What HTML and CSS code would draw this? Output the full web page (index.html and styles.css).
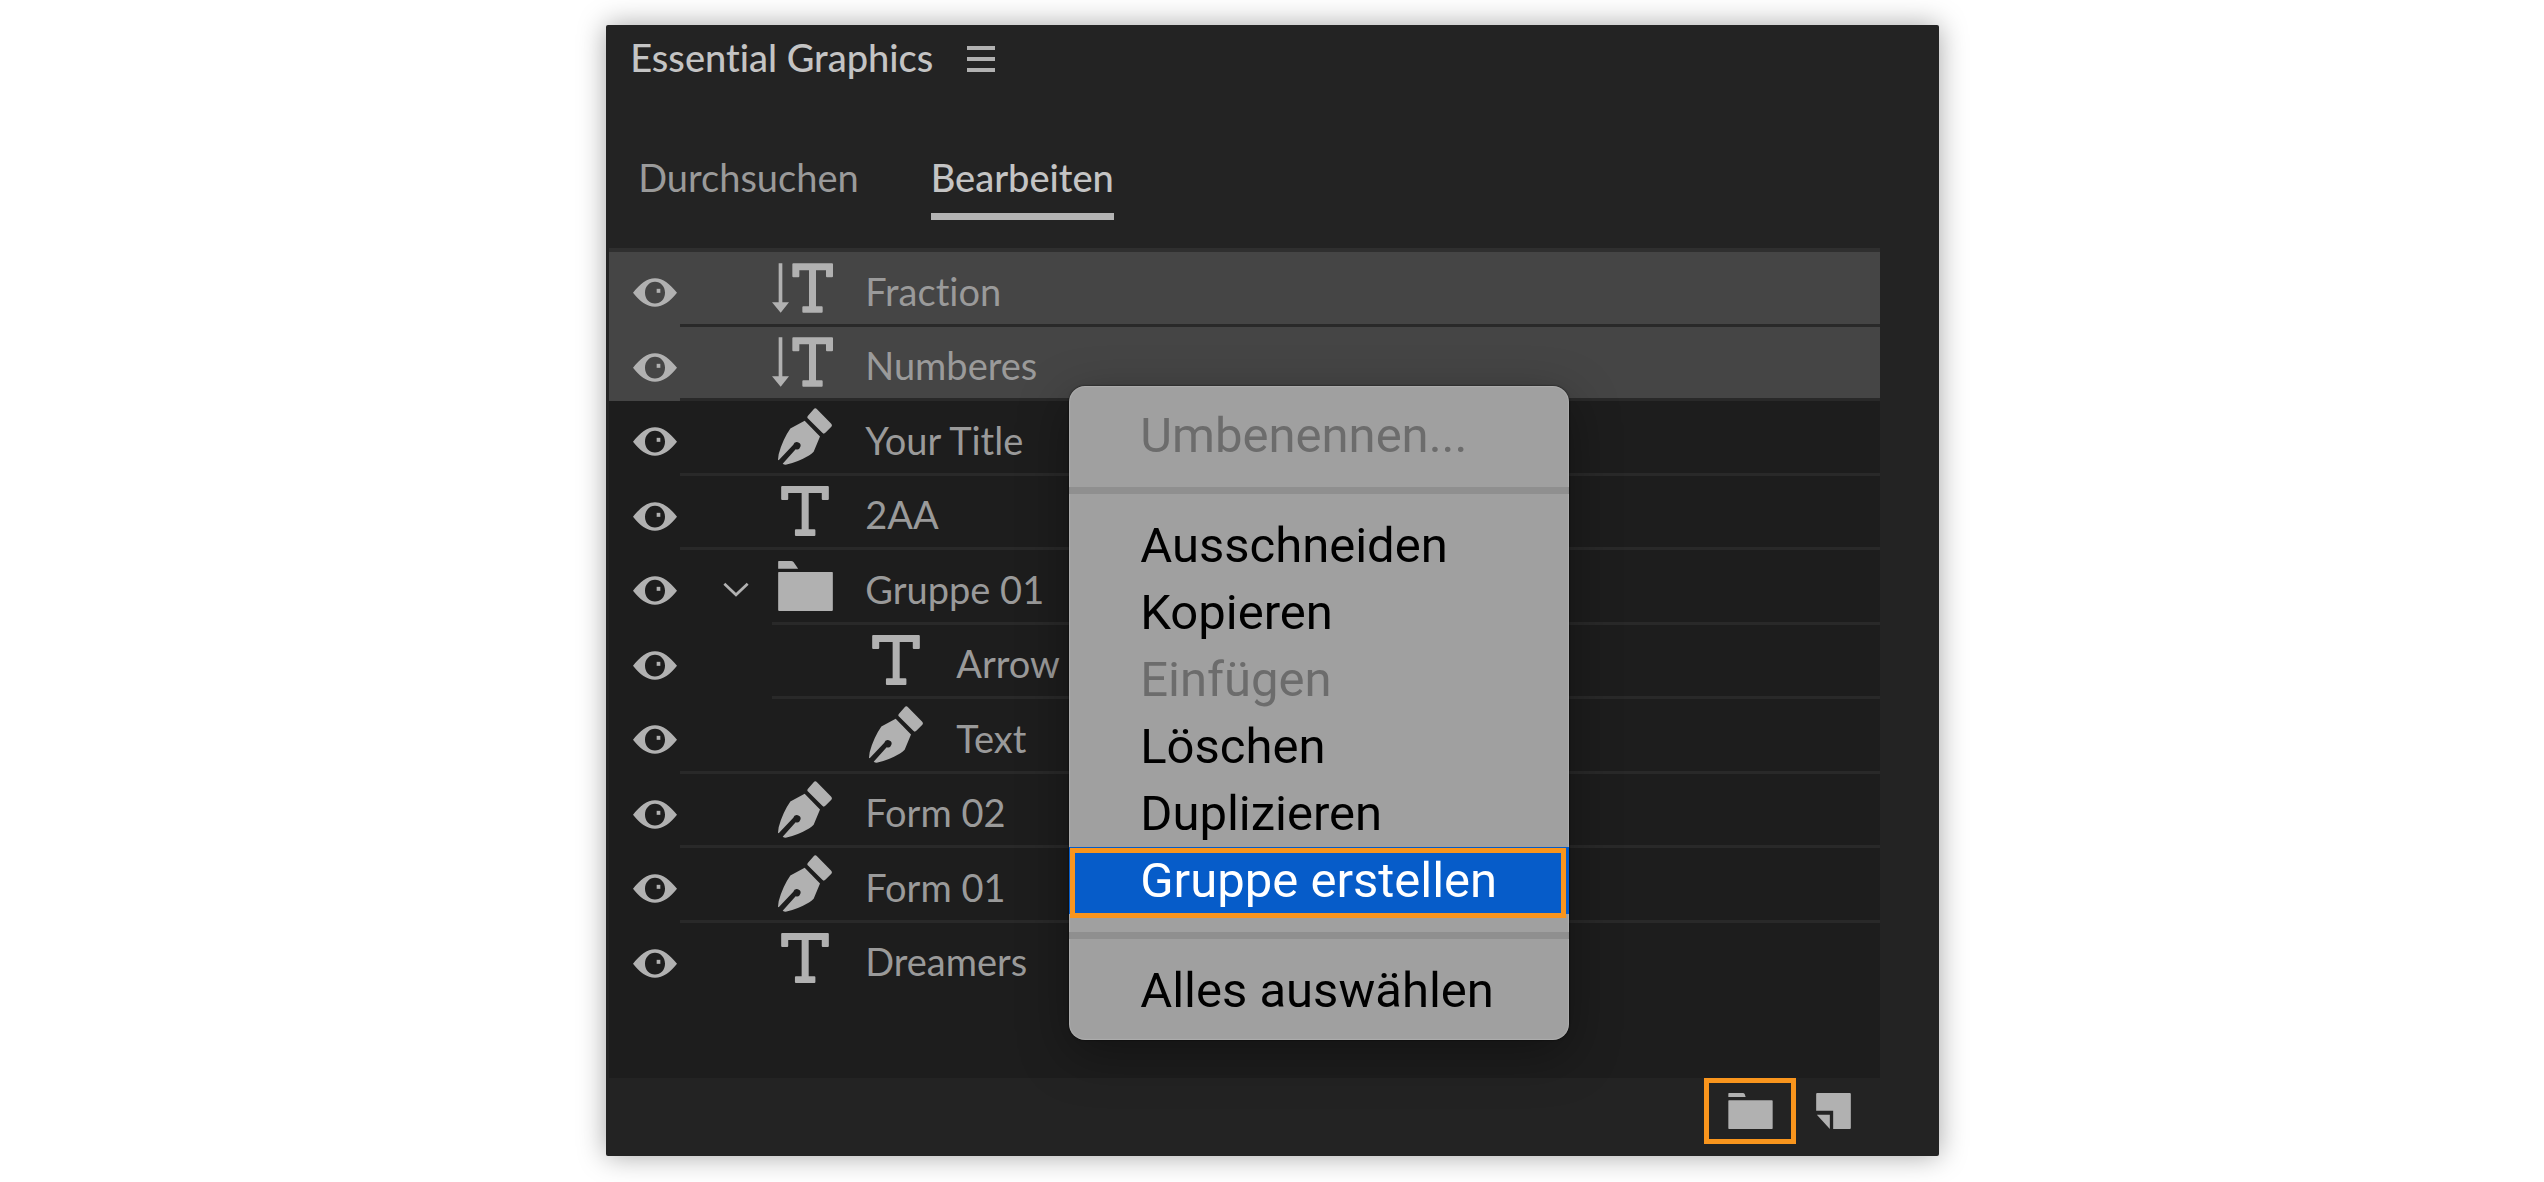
FILE: index.html
```html
<!DOCTYPE html>
<html lang="de">
	<head>
		<meta charset="utf-8">
		<title>Essential Graphics</title>
		<meta name="viewport" content="width=device-width,initial-scale=1">
		<link rel="stylesheet" href="styles.css">
	</head>
	<body>
		<svg class="sprite" aria-hidden="true">
			<symbol id="eye" viewBox="0 0 132 86">
				<path fill-rule="evenodd" d="M0 44C20 18 42 0 66 0s46 18 66 44C112 70 90 86 66 86S20 70 0 44zM66 11C49 11 36 25 36 44s13 32 30 32 30-13 30-32-13-33-30-33z"/>
				<rect x="71" y="32" width="11" height="12"/>
			</symbol>
			<symbol id="type" viewBox="0 0 142 149">
				<path d="M3 0h136q3 0 3 3v36q0 3-3 3h-15q-3 0-3-3V21H82v108h17q3 0 3 3v14q0 3-3 3H44q-3 0-3-3v-14q0-3 3-3h17V21H21v18q0 3-3 3H3q-3 0-3-3V3q0-3 3-3z"/>
			</symbol>
			<symbol id="type-vertical" viewBox="0 0 198 149">
				<path d="M20 0h11v117h20l-25 32L0 117h20z"/>
				<path d="M64 0h116q3 0 3 3v36q0 3-3 3h-15q-3 0-3-3V21h-30v108h17q3 0 3 3v14q0 3-3 3H94q-3 0-3-3v-14q0-3 3-3h17V21H82v18q0 3-3 3H64q-3 0-3-3V3q0-3 3-3z"/>
			</symbol>
			<symbol id="pen" viewBox="0 0 162 170">
				<path d="M107 3q5-5 10 0l42 43q5 5 1 10l-18 18q-5 5-9 0L90 31q-4-4 0-8z"/>
				<path d="M0 155L2 138Q14 94 37 61L80 38l46 47-19 46q-6 6-14 11-34 20-70 28-5 0-9-3l39-44A11 11 0 1 0 46 110L2 156z"/>
			</symbol>
			<symbol id="folder" viewBox="0 0 164 150">
				<path d="M2 0h37q4 0 7 3l14 20H0V2q0-2 2-2zM2 33h160q2 0 2 2v112q0 3-3 3H3q-3 0-3-3V35q0-2 2-2z"/>
			</symbol>
			<symbol id="bin" viewBox="0 0 133 108">
				<path d="M2 0h42q3 0 5 3l3 9H0V2q0-2 2-2zM2 22h129q2 0 2 2v82q0 2-2 2H2q-2 0-2-2V24q0-2 2-2z"/>
			</symbol>
			<symbol id="new-item" viewBox="0 0 104 108">
				<path d="M3 0h98q3 0 3 3v102q0 3-3 3H51V53H0V3q0-3 3-3zM2 65h39v43z"/>
			</symbol>
			<symbol id="chevron" viewBox="0 0 78 44">
				<path d="M4 5l35 33L74 5" fill="none" stroke="currentColor" stroke-width="8"/>
			</symbol>
			<symbol id="menu" viewBox="0 0 28 26">
				<path d="M0 0h28v4H0zM0 11h28v4H0zM0 22h28v4H0z"/>
			</symbol>
		</svg>

		<main class="panel">
			<header class="panel-header">
				<h1>Essential Graphics</h1>
				<button class="panel-menu" aria-label="Bedienfeldmenü"><svg width="28" height="26"><use href="#menu"/></svg></button>
			</header>

			<nav class="tabs">
				<button class="tab">Durchsuchen</button>
				<button class="tab active">Bearbeiten</button>
			</nav>

			<ul class="layers">
				<li class="layer selected">
					<button class="eye" aria-label="Sichtbarkeit"><svg width="44" height="29"><use href="#eye"/></svg></button>
					<span class="twist"></span>
					<div class="item"><span class="icon"><svg width="66" height="50"><use href="#type-vertical"/></svg></span><span class="name">Fraction</span></div>
				</li>
				<li class="layer selected">
					<button class="eye" aria-label="Sichtbarkeit"><svg width="44" height="29"><use href="#eye"/></svg></button>
					<span class="twist"></span>
					<div class="item"><span class="icon"><svg width="66" height="50"><use href="#type-vertical"/></svg></span><span class="name">Numberes</span></div>
				</li>
				<li class="layer">
					<button class="eye" aria-label="Sichtbarkeit"><svg width="44" height="29"><use href="#eye"/></svg></button>
					<span class="twist"></span>
					<div class="item"><span class="icon"><svg width="54" height="57"><use href="#pen"/></svg></span><span class="name">Your Title</span></div>
				</li>
				<li class="layer">
					<button class="eye" aria-label="Sichtbarkeit"><svg width="44" height="29"><use href="#eye"/></svg></button>
					<span class="twist"></span>
					<div class="item"><span class="icon"><svg width="48" height="50"><use href="#type"/></svg></span><span class="name">2AA</span></div>
				</li>
				<li class="layer group">
					<button class="eye" aria-label="Sichtbarkeit"><svg width="44" height="29"><use href="#eye"/></svg></button>
					<button class="twist" aria-label="Gruppe schließen"><svg width="26" height="15"><use href="#chevron"/></svg></button>
					<div class="item"><span class="icon"><svg width="55" height="50"><use href="#folder"/></svg></span><span class="name">Gruppe 01</span></div>
				</li>
				<li class="layer group child">
					<button class="eye" aria-label="Sichtbarkeit"><svg width="44" height="29"><use href="#eye"/></svg></button>
					<span class="twist"></span>
					<div class="item"><span class="icon"><svg width="48" height="50"><use href="#type"/></svg></span><span class="name">Arrow</span></div>
				</li>
				<li class="layer child">
					<button class="eye" aria-label="Sichtbarkeit"><svg width="44" height="29"><use href="#eye"/></svg></button>
					<span class="twist"></span>
					<div class="item"><span class="icon"><svg width="54" height="57"><use href="#pen"/></svg></span><span class="name">Text</span></div>
				</li>
				<li class="layer">
					<button class="eye" aria-label="Sichtbarkeit"><svg width="44" height="29"><use href="#eye"/></svg></button>
					<span class="twist"></span>
					<div class="item"><span class="icon"><svg width="54" height="57"><use href="#pen"/></svg></span><span class="name">Form 02</span></div>
				</li>
				<li class="layer">
					<button class="eye" aria-label="Sichtbarkeit"><svg width="44" height="29"><use href="#eye"/></svg></button>
					<span class="twist"></span>
					<div class="item"><span class="icon"><svg width="54" height="57"><use href="#pen"/></svg></span><span class="name">Form 01</span></div>
				</li>
				<li class="layer">
					<button class="eye" aria-label="Sichtbarkeit"><svg width="44" height="29"><use href="#eye"/></svg></button>
					<span class="twist"></span>
					<div class="item"><span class="icon"><svg width="48" height="50"><use href="#type"/></svg></span><span class="name">Dreamers</span></div>
				</li>
			</ul>

			<footer class="panel-footer">
				<button class="tool marked" aria-label="Gruppe erstellen"><svg width="45" height="36"><use href="#bin"/></svg></button>
				<button class="tool" aria-label="Neue Ebene"><svg width="35" height="36"><use href="#new-item"/></svg></button>
			</footer>

			<div class="context-menu">
				<button disabled>Umbenennen...</button>
				<hr>
				<button>Ausschneiden</button>
				<button>Kopieren</button>
				<button disabled>Einfügen</button>
				<button>Löschen</button>
				<button>Duplizieren</button>
				<button class="current">Gruppe erstellen</button>
				<hr>
				<button>Alles auswählen</button>
			</div>
		</main>
	</body>
</html>
```
FILE: styles.css
```css
* {
	box-sizing: border-box;
	margin: 0;
	padding: 0;
}

body {
	background: #fff;
	padding: 25px 0 26px 1px;
	font-family: Lato, 'Noto Sans', sans-serif;
	font-size: 38px;
	line-height: 44px;
	font-variant-ligatures: none;
	color: #9a9a9a;
}

button {
	background: none;
	border: 0;
	color: inherit;
	font: inherit;
	text-align: left;
	cursor: pointer;
}

svg {
	display: block;
	fill: currentColor;
}

.sprite {
	position: absolute;
	width: 0;
	height: 0;
}

.panel {
	position: relative;
	width: 52.4%;
	min-width: 1100px;
	margin: 0 auto;
	background: #232323;
	border-radius: 2px;
	box-shadow: 0 0 28px rgba(0,0,0,.36);
}

.panel-header {
	display: flex;
	align-items: center;
	gap: 34px;
	padding: 10px 24px 0;
}

.panel-header h1 {
	font-size: 38px;
	font-weight: 500;
	color: #c4c4c4;
}

.panel-menu {
	padding-top: 4px;
	color: #b1b1b1;
}

.tabs {
	display: flex;
	gap: 72px;
	padding: 76px 32px 0;
}

.tab {
	padding-bottom: 14px;
	border-bottom: 7px solid transparent;
}

.tab.active {
	border-color: #b4b4b4;
	font-weight: 500;
	color: #c4c4c4;
}

/* layer list */
.layers {
	display: grid;
	grid-template-rows: repeat(10, 1fr);
	list-style: none;
	height: 830px;
	margin: 28px 59px 0 3px;
	padding-bottom: 81px;
	border-top: 4px solid #2f2f2f;
	background: #1d1d1d;
}

.layer {
	display: flex;
}

.layer.selected {
	background: #454545;
}

.eye {
	width: 71px;
	padding: 7px 0 0 24px;
	color: #b1b1b1;
}

.twist {
	display: flex;
	align-items: center;
	justify-content: center;
	width: 92px;
	padding: 8px 0 0 20px;
	border-bottom: 3px solid #292929;
	color: #b1b1b1;
}

.item {
	display: flex;
	align-items: center;
	flex: 1;
	gap: 27px;
	border-bottom: 3px solid #292929;
}

.group .twist {
	border-color: transparent;
}

.child .item {
	padding-left: 91px;
}

.layer:last-child .twist,
.layer:last-child .item {
	border-color: transparent;
}

.icon {
	display: flex;
	justify-content: center;
	width: 66px;
	color: #b1b1b1;
}

.name {
	padding-top: 6px;
}

/* bottom toolbar */
.panel-footer {
	display: flex;
	align-items: flex-start;
	gap: 4px;
	height: 78px;
	padding-right: 72px;
	justify-content: flex-end;
}

.tool {
	display: flex;
	align-items: center;
	height: 66px;
	padding: 0 16px;
	color: #b1b1b1;
}

.tool.marked {
	padding: 0 18px 0 19px;
	border: 5px solid #f9951d;
}

/* context menu over the layers */
.context-menu {
	position: absolute;
	top: 361px;
	left: 463px;
	display: flex;
	flex-direction: column;
	width: 500px;
	padding: 16px 0;
	border-radius: 16px;
	background: #a0a0a0;
	box-shadow: inset 0 0 1px 1px rgba(255,255,255,.15), 0 0 2px rgba(0,0,0,.8), 0 14px 50px rgba(0,0,0,.35);
	font-family: Roboto, 'Liberation Sans', sans-serif;
	font-size: 49px;
	color: #000;
}

.context-menu button {
	position: relative;
	height: 67px;
	padding: 0 71px;
	line-height: 67px;
	white-space: nowrap;
}

.context-menu button:disabled {
	color: #6c6c6c;
}

.context-menu hr {
	height: 7px;
	margin: 18px 0;
	border: 0;
	background: #8f8f8f;
}

.context-menu .current {
	background: #065cc9;
	color: #fff;
}

.context-menu .current::after {
	content: "";
	position: absolute;
	top: 1px;
	left: 1px;
	right: 3px;
	box-sizing: border-box;
	height: 70px;
	border: 5px solid #f9951d;
}
```
